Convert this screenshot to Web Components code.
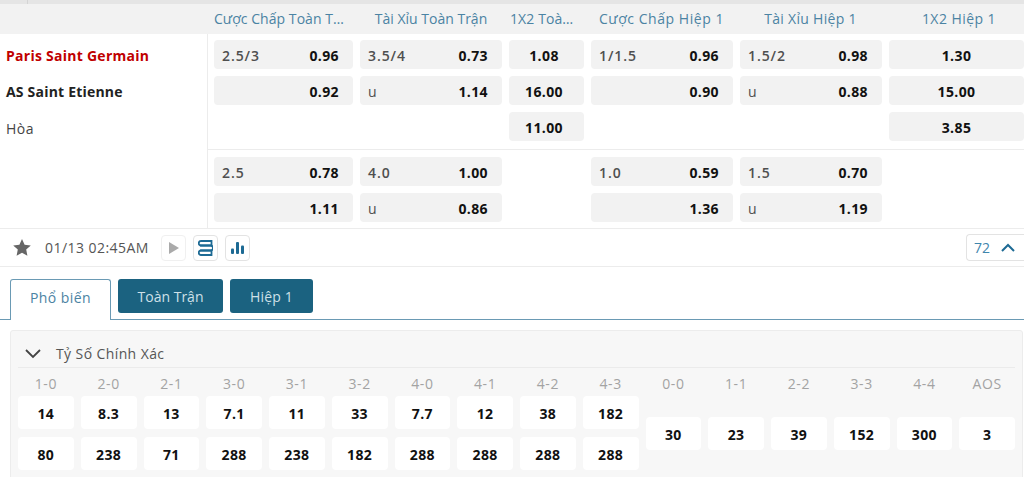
<!DOCTYPE html>
<html lang="vi"><head><meta charset="utf-8"><title>Odds</title>
<style>
html,body{margin:0;padding:0;background:#fff;height:477px;overflow:hidden}
body{font-family:"Open Sans","Noto Sans",sans-serif;font-size:14px;color:#333}
</style></head><body>
<match-page></match-page>
<script>
const sheet=(s)=>`<style>${s}</style>`;
class Base extends HTMLElement{
  constructor(){super();this.attachShadow({mode:'open'});}
}
class OddsCell extends Base{
  connectedCallback(){
    const l=this.getAttribute('line')||'',v=this.getAttribute('value')||'';
    const center=this.hasAttribute('center');
    this.shadowRoot.innerHTML=sheet(`
      :host{display:flex;height:29px;box-sizing:border-box;min-width:0;align-items:center;background:#f2f2f2;border-radius:4px;
        padding:2px 14px 0 8px;justify-content:${center?'center':'space-between'};font-size:14px;line-height:27px}
      :host([center]){padding:2px 0 0}
      :host([shift]){padding:2px 5px 0 0}
      .l{color:#4f4f4f;font-weight:600;letter-spacing:.9px}.l.u{font-weight:400;letter-spacing:0}
      .v{color:#111;font-weight:700;letter-spacing:.4px}
    `)+(center?'':`<span class="l ${l==='u'?'u':''}">${l}</span>`)+`<span class="v">${v}</span>`;
  }
}
class OddsHeader extends Base{
  connectedCallback(){
    this.shadowRoot.innerHTML=sheet(`
      :host{display:grid;grid-template-columns:208px 145px 149px 82px 149px 149px 142px;height:30px;background:#f2f2f2;
        color:#4b83a3;font-size:14px;line-height:30px}
      div{text-align:center;white-space:nowrap;overflow:hidden;text-overflow:ellipsis;box-sizing:border-box;padding-left:7px}
      div:first-child{border-right:1px solid #e6e6e6}
      .c1{padding:0 7px 0 6px;letter-spacing:.05px}
      .c3{padding:0 9px 0 8px;text-align:left;letter-spacing:.1px}
      .c4{padding:0 0 0 6px;letter-spacing:.55px}
      .c5{padding:0 0 0 6px;letter-spacing:.3px}
      .c6{padding:0 0 0 12px;letter-spacing:.45px}
    `)+`<div></div><div class="c1">Cược Chấp Toàn Trận</div><div>Tài Xỉu Toàn Trận</div><div class="c3">1X2 Toàn Trận</div><div class="c4">Cược Chấp Hiệp 1</div><div class="c5">Tài Xỉu Hiệp 1</div><div class="c6">1X2 Hiệp 1</div>`;
  }
}
class OddsTable extends Base{
  connectedCallback(){
    const c=(l,v)=>`<odds-cell line="${l}" value="${v}"></odds-cell>`;
    const m=(v,s)=>v?`<odds-cell center ${s?'shift':''} value="${v}"></odds-cell>`:`<i></i>`;
    const col=(a)=>`<div class="col">${a.join('')}</div>`;
    this.shadowRoot.innerHTML=sheet(`
      :host{display:block}
      .main{display:grid;grid-template-columns:208px 1fr}
      .teams{border-right:1px solid #ececec;display:flex;flex-direction:column;padding-top:6px;box-sizing:border-box}
      .teams div{height:36px;line-height:32px;padding-left:6px;font-size:14px;white-space:nowrap}
      .teams .h{color:#c00000;font-weight:700;letter-spacing:.26px}
      .teams .a{color:#222;font-weight:700;letter-spacing:.2px}
      .teams .d{color:#444;letter-spacing:.5px;padding-top:1px}
      .sets{display:flex;flex-direction:column;min-width:0}
      .set{display:grid;grid-template-columns:139px 142px 75px 142px 142px 135px;column-gap:7px;padding:6px 0 0 6px}
      .set.one{height:109px;border-bottom:1px solid #ececec}
      .set.two{height:71px;padding-top:7px}
      .col{display:flex;flex-direction:column;gap:7px}
      i{display:block;height:29px}
    `)+`<div class="main"><div class="teams"><div class="h">Paris Saint Germain</div><div class="a">AS Saint Etienne</div><div class="d">Hòa</div></div>
      <div class="sets"><div class="set one">${[
        col([c('2.5/3','0.96'),c('','0.92')]),col([c('3.5/4','0.73'),c('u','1.14')]),
        col([m('1.08',1),m('16.00',1),m('11.00',1)]),col([c('1/1.5','0.96'),c('','0.90')]),
        col([c('1.5/2','0.98'),c('u','0.88')]),col([m('1.30'),m('15.00'),m('3.85')])].join('')}</div>
      <div class="set two">${[
        col([c('2.5','0.78'),c('','1.11')]),col([c('4.0','1.00'),c('u','0.86')]),col([m(''),m('')]),
        col([c('1.0','0.59'),c('','1.36')]),col([c('1.5','0.70'),c('u','1.19')]),col([m(''),m('')])].join('')}</div></div></div>`;
  }
}
class IconBtn extends Base{
  connectedCallback(){
    this.shadowRoot.innerHTML=sheet(`
      :host{display:flex;width:23px;height:24px;border:1px solid #e3e3e3;border-radius:4px;align-items:center;justify-content:center;box-sizing:content-box}
      :host([faint]){border-color:#f0f0f0}
      svg{display:block}
    `)+`<slot></slot>`;
  }
}
class MatchBar extends Base{
  connectedCallback(){
    this.shadowRoot.innerHTML=sheet(`
      :host{display:flex;align-items:center;height:37px;border-top:1px solid #ececec;border-bottom:1px solid #ececec;box-sizing:content-box;font-size:14px;color:#555}
      .star{margin-left:13px;display:block}
      .t{margin-left:14px;width:116px;white-space:nowrap;letter-spacing:.45px}
      .b{display:flex;gap:7px}
      .count{margin-left:auto;display:flex;align-items:center;height:25px;border:1px solid #e3e3e3;border-radius:4px 0 0 4px;border-right:0;color:#3f86ad;padding-left:7px;box-sizing:content-box;width:50px}
      .count svg{margin-left:11px}
    `)+`<svg class="star" width="18" height="17" viewBox="0 0 18 17"><path fill="#666" d="M9 0l2.600 5.700 6.200.7-4.600 4.200 1.200 6.200L9 13.700 3.600 16.800l1.200-6.200L.2 6.400l6.200-.7z"/></svg>
    <span class="t">01/13 02:45AM</span>
    <div class="b">
      <icon-btn faint><svg width="10" height="12" viewBox="0 0 10 12"><path fill="#aaa" d="M0 0l10 6-10 6z"/></svg></icon-btn>
      <icon-btn><svg width="15" height="16" viewBox="0 0 15 16" fill="none" stroke="#1d6a94" stroke-width="1.800"><path d="M3 1h10.500v4.500H3A2.250 2.250 0 0 1 3 1z"/><path d="M2 5.500h10.500a2.500 2.500 0 0 1 0 5H2"/><path d="M3 10.500h10.500V15H3a2.250 2.250 0 0 1 0-4.500z"/></svg></icon-btn>
      <icon-btn><svg width="14" height="12" viewBox="0 0 14 12" fill="#1d6a94"><rect x="0" y="6.500" width="3" height="5.500" rx="1"/><rect x="5" y="0" width="3" height="12" rx="1"/><rect x="10" y="3.500" width="3" height="8.500" rx="1"/></svg></icon-btn>
    </div>
    <div class="count"><span>72</span><svg width="14" height="9" viewBox="0 0 14 9" fill="none" stroke="#1d6a94" stroke-width="2"><path d="M1 8l6-6 6 6"/></svg></div>`;
  }
}
class TabBar extends Base{
  connectedCallback(){
    this.shadowRoot.innerHTML=sheet(`
      :host{display:flex;margin-top:12px;padding-left:10px;gap:7px;border-bottom:1px solid #6a9ab4;height:40px;font-size:14px}
      div{box-sizing:border-box;height:34px;line-height:35px;text-align:center;background:#1b6280;color:#cfe0e8;border-radius:3px}
      .on{width:101px;height:41px;line-height:35px;background:#fff;color:#4b83a3;border:1px solid #6a9ab4;border-bottom:0;border-radius:3px 3px 0 0;letter-spacing:.45px}
      .a{width:105px}.b{width:83px;letter-spacing:.2px}
    `)+`<div class="on">Phổ biến</div><div class="a">Toàn Trận</div><div class="b">Hiệp 1</div>`;
  }
}
class ScoreCell extends Base{
  connectedCallback(){
    this.shadowRoot.innerHTML=sheet(`
      :host{display:block;height:33px;line-height:35px;background:#fff;border-radius:4px;text-align:center;font-weight:700;font-size:14px;color:#111;letter-spacing:.4px}
    `)+`<slot></slot>`;
  }
}
class ScorePanel extends Base{
  connectedCallback(){
    const a=[['1-0','14','80'],['2-0','8.3','238'],['2-1','13','71'],['3-0','7.1','288'],['3-1','11','238'],['3-2','33','182'],['4-0','7.7','288'],['4-1','12','288'],['4-2','38','288'],['4-3','182','288'],['0-0','30'],['1-1','23'],['2-2','39'],['3-3','152'],['4-4','300'],['AOS','3']];
    this.shadowRoot.innerHTML=sheet(`
      :host{display:block;margin:10px 0 0 10px;width:1013px;box-sizing:border-box;height:160px;background:#f7f7f7;border:1px solid #ececec;border-radius:3px;padding:0 7px}
      .title{display:flex;align-items:center;border-bottom:1px solid #ebebeb;color:#555;font-size:14px;padding-top:9px;height:27px;letter-spacing:.4px}
      .title svg{margin:0 15px 0 7px}
      .grid{display:grid;grid-template-columns:repeat(16,1fr);column-gap:7px}
      .col{display:flex;flex-direction:column}
      .lab{height:28px;line-height:32px;text-align:center;color:#a3a3a3;font-size:14px;letter-spacing:.55px}
      .vals{display:flex;flex-direction:column;gap:8px;justify-content:center;height:74px;padding-bottom:1px;box-sizing:content-box}
    `)+`<div class="title"><svg width="16" height="10" viewBox="0 0 16 10" fill="none" stroke="#444" stroke-width="1.800"><path d="M1 1l7 7 7-7"/></svg>Tỷ Số Chính Xác</div>
    <div class="grid">${a.map(r=>`<div class="col"><div class="lab">${r[0]}</div><div class="vals">${r.slice(1).map(v=>`<score-cell>${v}</score-cell>`).join('')}</div></div>`).join('')}</div>`;
  }
}
class MatchPage extends Base{
  connectedCallback(){
    this.shadowRoot.innerHTML=sheet(`
      :host{display:block;width:1024px;height:477px;overflow:hidden}
      .top{height:4px;background:#e5e5e5;padding-left:27px;box-sizing:border-box}
      .top b{display:block;width:1px;height:4px;background:#d4d4d4}
    `)+`<div class="top"><b></b></div><odds-header></odds-header><odds-table></odds-table><match-bar></match-bar><tab-bar></tab-bar><score-panel></score-panel>`;
  }
}
[['odds-cell',OddsCell],['odds-header',OddsHeader],['odds-table',OddsTable],['icon-btn',IconBtn],['match-bar',MatchBar],['tab-bar',TabBar],['score-cell',ScoreCell],['score-panel',ScorePanel],['match-page',MatchPage]].forEach(([n,c])=>customElements.define(n,c));
</script></body></html>
